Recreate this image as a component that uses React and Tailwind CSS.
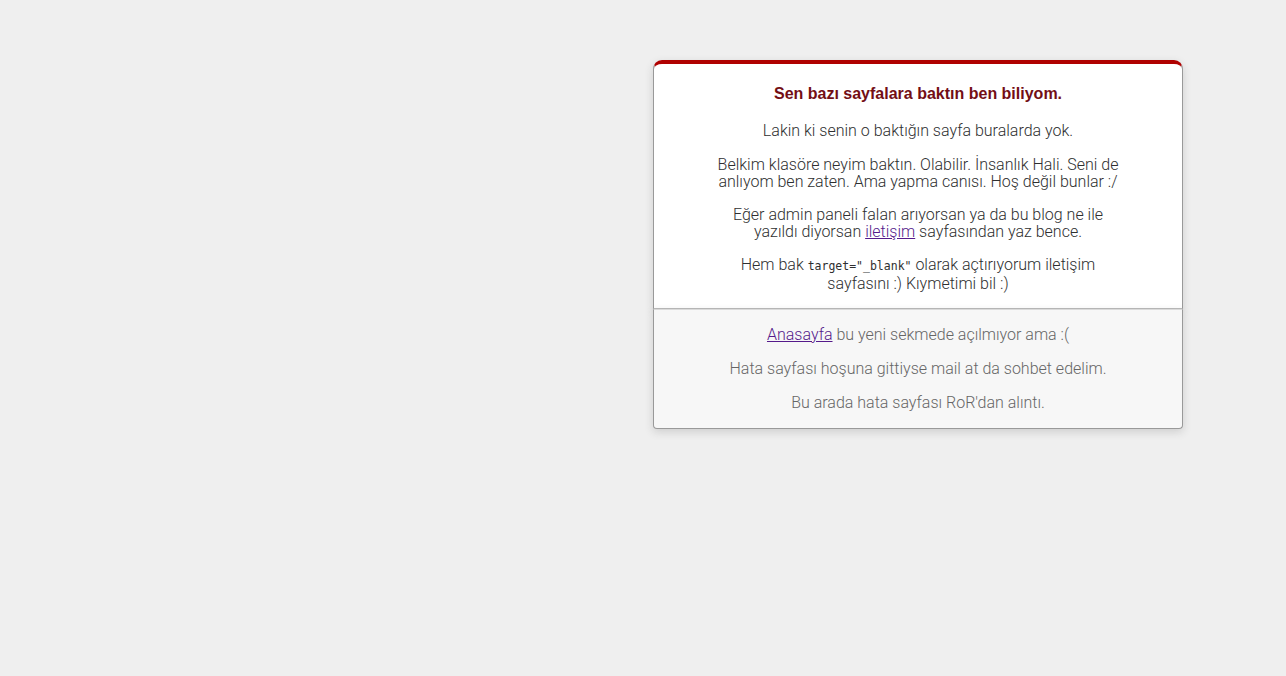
export default function App() {
  const light = { fontFamily: 'Roboto, "Liberation Sans", Arial, sans-serif', fontWeight: 300 };
  return (
    <div className="min-h-[676px] bg-[#EFEFEF] text-center text-[16px] text-[#2E2F30]" style={light}>
      <div className="ml-[653px] w-[530px] pt-[60px]">
        <div className="rounded-t-[9px] border border-x-[#999] border-b-[#BBB] border-t-4 border-t-[#B00100] bg-white px-[63px] pt-[7px] pb-0 shadow-[0_3px_8px_rgba(50,50,50,0.17)]">
          <h1
            className="mt-[10.72px] mb-4 text-[16px] font-bold leading-[1.5em] text-[#730E15]"
            style={{ fontFamily: '"Liberation Sans", Arial, sans-serif', fontWeight: 700 }}
          >
            Sen bazı sayfalara baktın ben biliyom.
          </h1>
          <p className="mb-4 leading-[18px]">Lakin ki senin o baktığın sayfa buralarda yok.</p>
          <p className="mb-4 leading-[17px]">
            Belkim klasöre neyim baktın. Olabilir. İnsanlık Hali. Seni de anlıyom ben zaten. Ama yapma canısı. Hoş değil bunlar :/
          </p>
          <p className="mb-4 leading-[17px]">
            Eğer admin paneli falan arıyorsan ya da bu blog ne ile yazıldı diyorsan{" "}
            <a href="#" className="text-[#551A8B] underline">iletişim</a> sayfasından yaz bence.
          </p>
          <p className="pb-4 leading-[17px]">
            Hem bak{" "}
            <code className="text-[11.5px]" style={{ fontFamily: '"DejaVu Sans Mono", monospace', fontWeight: 400 }}>
              target="_blank"
            </code>{" "}
            olarak açtırıyorum iletişim sayfasını :) Kıymetimi bil :)
          </p>
        </div>
        <div className="mb-4 flex flex-col gap-4 rounded-b-[4px] border border-x-[#999] border-b-[#999] border-t-[#DADADA] bg-[#F7F7F7] p-4 leading-[18px] text-[#666] shadow-[0_3px_8px_rgba(50,50,50,0.17)]">
          <p>
            <a href="#" className="text-[#551A8B] underline">Anasayfa</a> bu yeni sekmede açılmıyor ama :(
          </p>
          <p>Hata sayfası hoşuna gittiyse mail at da sohbet edelim.</p>
          <p>Bu arada hata sayfası RoR'dan alıntı.</p>
        </div>
      </div>
    </div>
  );
}
